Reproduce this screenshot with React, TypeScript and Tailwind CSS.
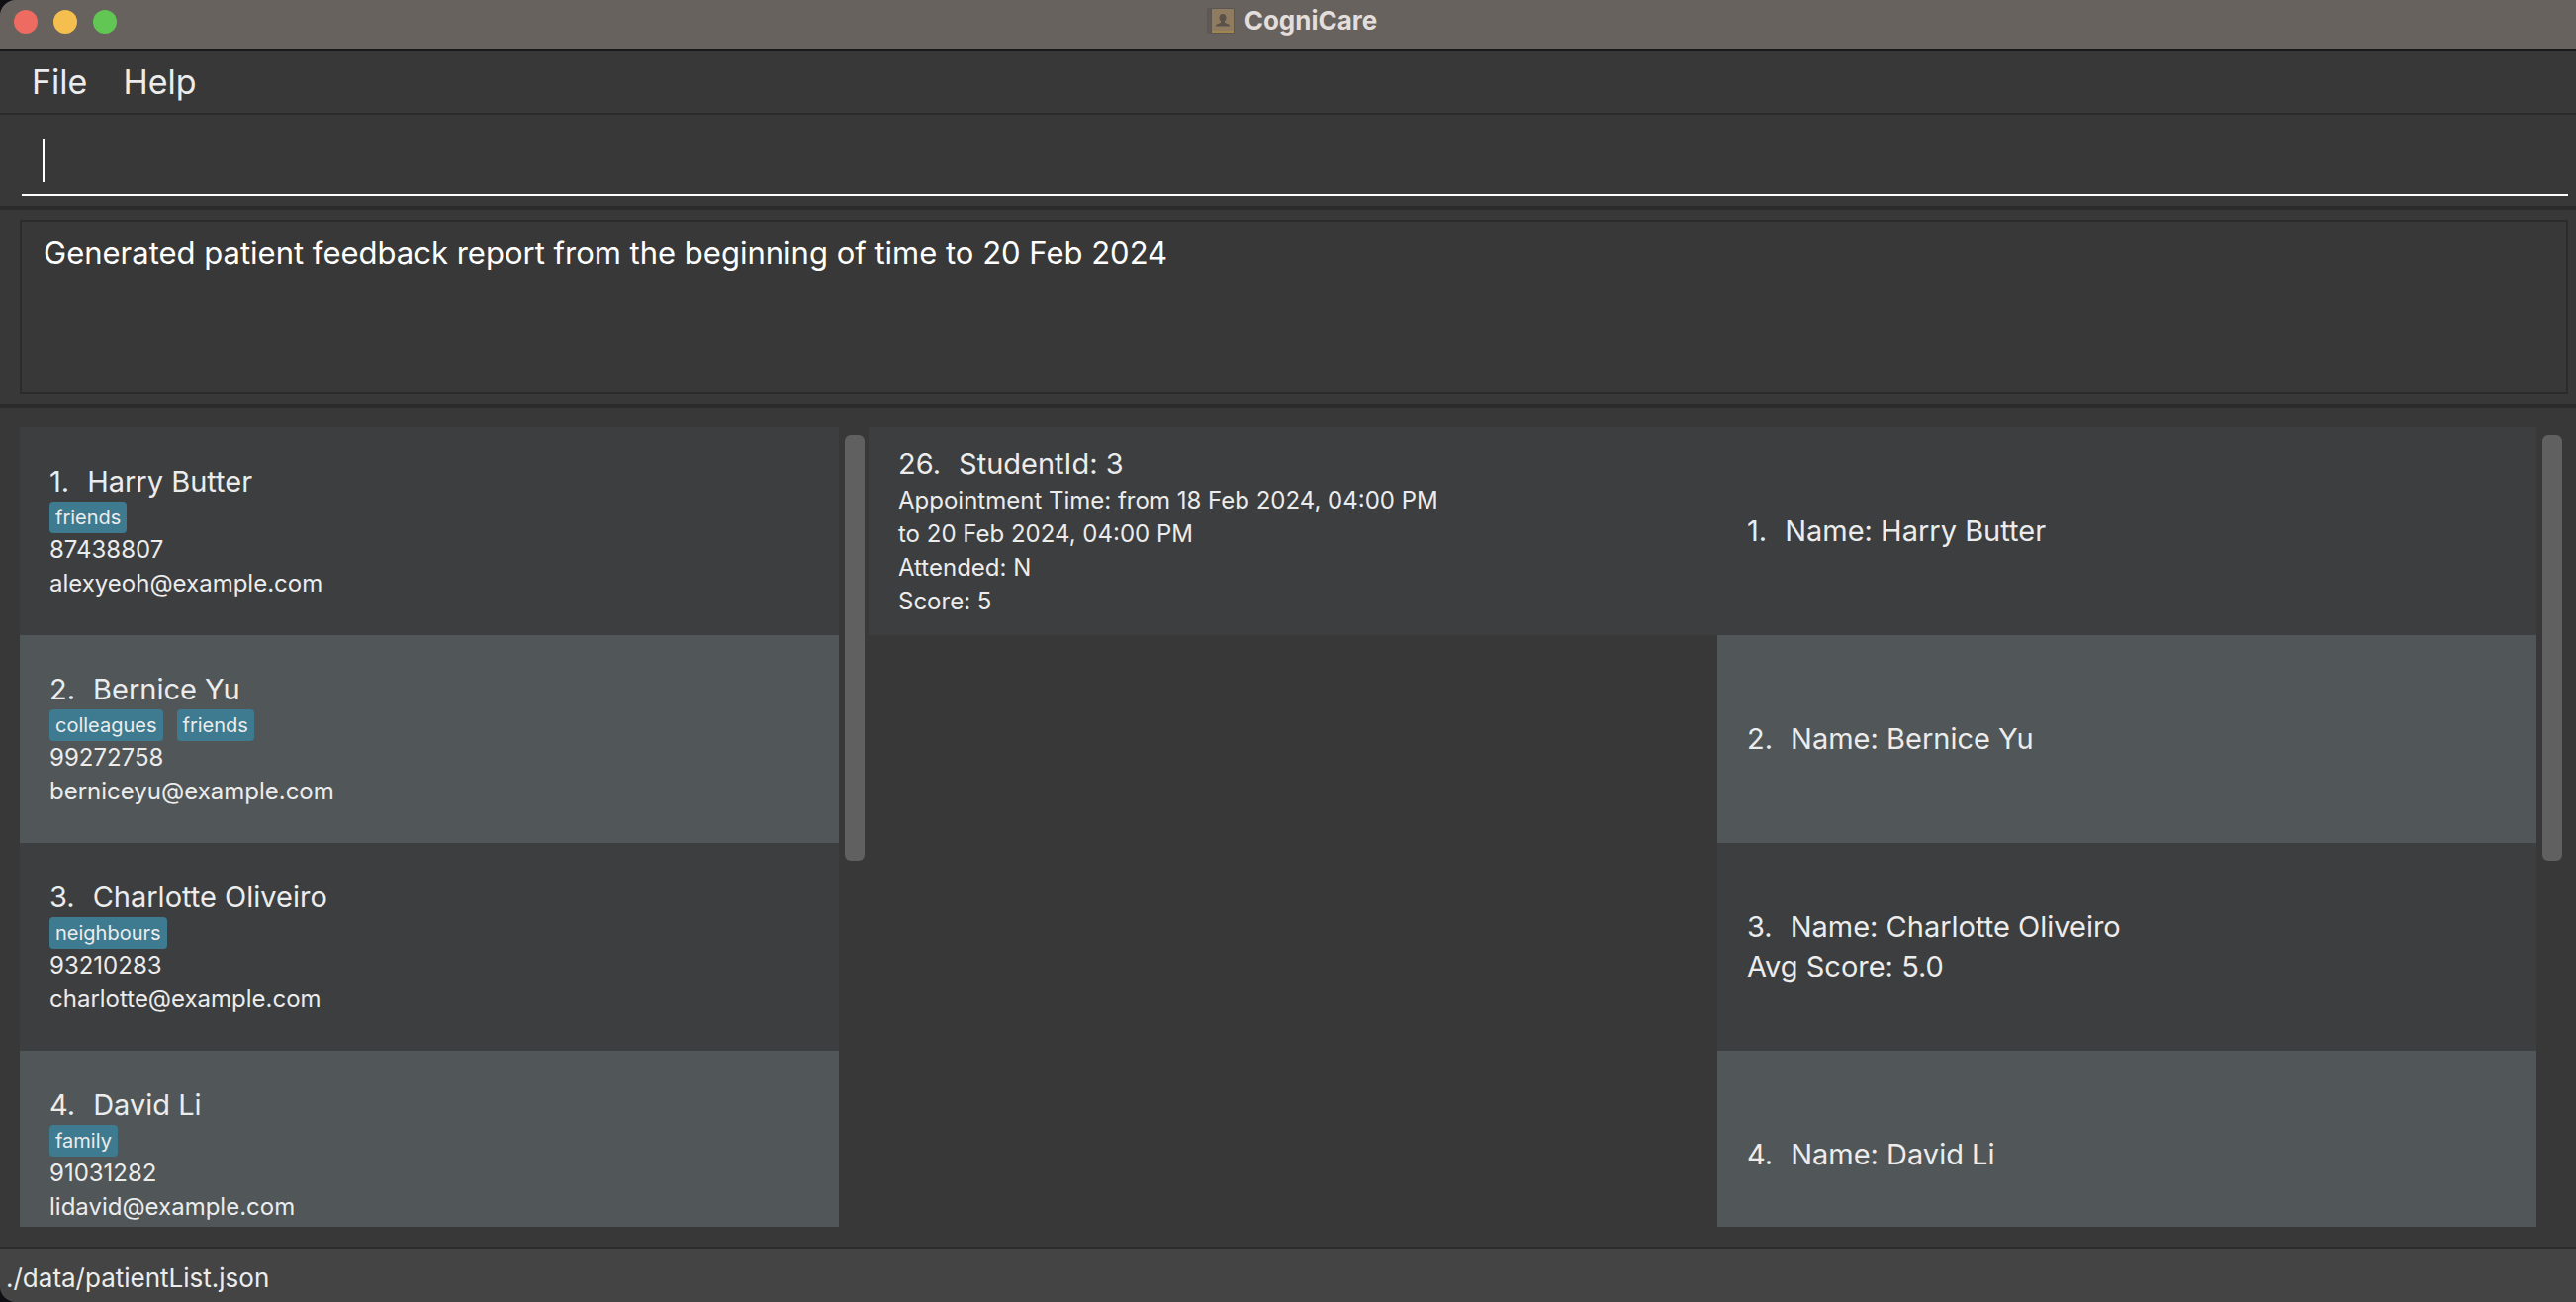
import React from 'react';

type Patient = {
  name: string;
  tags: string[];
  phone: string;
  email: string;
  average?: string;
};

const patients: Patient[] = [
  { name: 'Harry Butter', tags: ['friends'], phone: '87438807', email: 'alexyeoh@example.com' },
  { name: 'Bernice Yu', tags: ['colleagues', 'friends'], phone: '99272758', email: 'berniceyu@example.com' },
  { name: 'Charlotte Oliveiro', tags: ['neighbours'], phone: '93210283', email: 'charlotte@example.com', average: '5.0' },
  { name: 'David Li', tags: ['family'], phone: '91031282', email: 'lidavid@example.com' },
];

const appointments = [
  {
    id: '26',
    student: '3',
    time: 'from 18 Feb 2024, 04:00 PM',
    end: 'to 20 Feb 2024, 04:00 PM',
    attended: 'N',
    score: '5',
  },
];

function BookIcon() {
  return (
    <svg className="h-7 w-7" viewBox="0 0 28 28" aria-hidden="true">
      <rect x="0" y="1" width="28" height="26" rx="2" fill="#5b5652" />
      <rect x="1" y="2" width="3" height="24" fill="#5f5954" />
      <rect x="5" y="2" width="22" height="24" rx="1" fill="#8f7c60" />
      <rect x="5" y="24" width="22" height="2" fill="#a0854f" />
      <path
        d="M16 7c2.200 0 3.500 1.500 3.500 3.700 0 1.700-.7 3-1.600 3.800v1.300l4 1.600c.8.400 1.100 1 1.100 2.100H9c0-1.100.3-1.700 1.100-2.100l4-1.600v-1.300c-.9-.8-1.600-2.100-1.600-3.800C12.500 8.500 13.800 7 16 7z"
        fill="#5a5148"
      />
    </svg>
  );
}

function Row({ index, children }: { index: number; children: React.ReactNode }) {
  return (
    <li
      className={
        'flex h-[210px] shrink-0 flex-col justify-center px-[30px] ' +
        (index % 2 === 0 ? 'bg-[#3c3e3f]' : 'bg-[#515658]')
      }
    >
      {children}
    </li>
  );
}

function Heading({ id, text }: { id: string | number; text: string }) {
  return (
    <h2 className="flex gap-[18px] text-[29px] leading-10">
      <span>{id}.</span>
      <span>{text}</span>
    </h2>
  );
}

function List({ label, scroll, children }: { label: string; scroll?: boolean; children: React.ReactNode }) {
  return (
    <section aria-label={label} className="flex min-h-0 min-w-0 flex-1">
      <ul className="flex min-w-0 flex-1 flex-col overflow-hidden">{children}</ul>
      {scroll && (
        <div className="w-[30px] shrink-0 px-[5px] py-2">
          <div className="ml-px h-[430px] w-5 rounded-md bg-[#606060]" />
        </div>
      )}
    </section>
  );
}

export default function App() {
  return (
    <div className="h-screen bg-[#101014]">
      <div className="flex h-full flex-col overflow-hidden rounded-l-2xl bg-[#383838] font-['Inter','Liberation_Sans',sans-serif] text-[#ececec]">
        <header className="grid h-[52px] shrink-0 grid-cols-[1fr_auto_1fr] items-center border-b-2 border-[#1a1a1a] bg-[#67625e] pb-2">
          <div className="flex gap-4 pt-0.5 pl-3.5">
            <button aria-label="Close" className="h-6 w-6 rounded-full bg-[#ed6b60]" />
            <button aria-label="Minimise" className="h-6 w-6 rounded-full bg-[#f5bf4f]" />
            <button aria-label="Zoom" className="h-6 w-6 rounded-full bg-[#62c655]" />
          </div>
          <h1 className="flex items-center gap-2.5 pl-2 text-[26px] leading-8 font-bold text-[#e3dedb]">
            <BookIcon />
            CogniCare
          </h1>
        </header>

        <nav className="flex h-16 shrink-0 items-center gap-9 border-b-2 border-[#2b2b2b] px-8 text-[34px] leading-10">
          <button>File</button>
          <button>Help</button>
        </nav>

        <div className="h-24 shrink-0 border-b-4 border-[#2b2b2b] pr-2 pb-2.5 pl-[22px]">
          <div className="relative h-full border-b-2 border-white">
            <input aria-label="Command" className="h-full w-full bg-transparent px-5 text-[31px] text-white outline-none" />
            <span className="absolute bottom-3 left-[21px] h-11 w-0.5 bg-white" />
          </div>
        </div>

        <div className="shrink-0 border-b-4 border-[#2b2b2b] py-2.5 pr-2 pl-5">
          <textarea
            readOnly
            aria-label="Result"
            className="block h-44 w-full resize-none border-2 border-[#2b2b2b] bg-transparent px-[22px] py-3 text-[31px] leading-10 text-white outline-none"
            defaultValue="Generated patient feedback report from the beginning of time to 20 Feb 2024"
          />
        </div>

        <main className="flex min-h-0 flex-1 py-5 pr-2.5 pl-5">
          <List label="Patients" scroll>
            {patients.map((p, i) => (
              <Row key={p.name} index={i}>
                <Heading id={i + 1} text={p.name} />
                <div className="flex gap-3.5">
                  {p.tags.map((t) => (
                    <span key={t} className="h-8 rounded bg-[#3e7b91] px-1.5 text-[20px] leading-8">
                      {t}
                    </span>
                  ))}
                </div>
                <p className="text-[24px] leading-[34px]">{p.phone}</p>
                <p className="text-[24px] leading-[34px]">{p.email}</p>
              </Row>
            ))}
          </List>

          <List label="Appointments">
            {appointments.map((a, i) => (
              <Row key={a.id} index={i}>
                <Heading id={a.id} text={`StudentId: ${a.student}`} />
                <p className="text-[24px] leading-[34px]">Appointment Time: {a.time}</p>
                <p className="text-[24px] leading-[34px]">{a.end}</p>
                <p className="text-[24px] leading-[34px]">Attended: {a.attended}</p>
                <p className="text-[24px] leading-[34px]">Score: {a.score}</p>
              </Row>
            ))}
          </List>

          <List label="Feedback" scroll>
            {patients.map((p, i) => (
              <Row key={p.name} index={i}>
                <Heading id={i + 1} text={`Name: ${p.name}`} />
                {p.average && <p className="text-[29px] leading-10">Avg Score: {p.average}</p>}
              </Row>
            ))}
          </List>
        </main>

        <footer className="h-14 shrink-0 border-t-2 border-[#2b2b2b] bg-[#444444] px-1.5 pt-2.5 text-[26px] leading-10">
          ./data/patientList.json
        </footer>
      </div>
    </div>
  );
}
